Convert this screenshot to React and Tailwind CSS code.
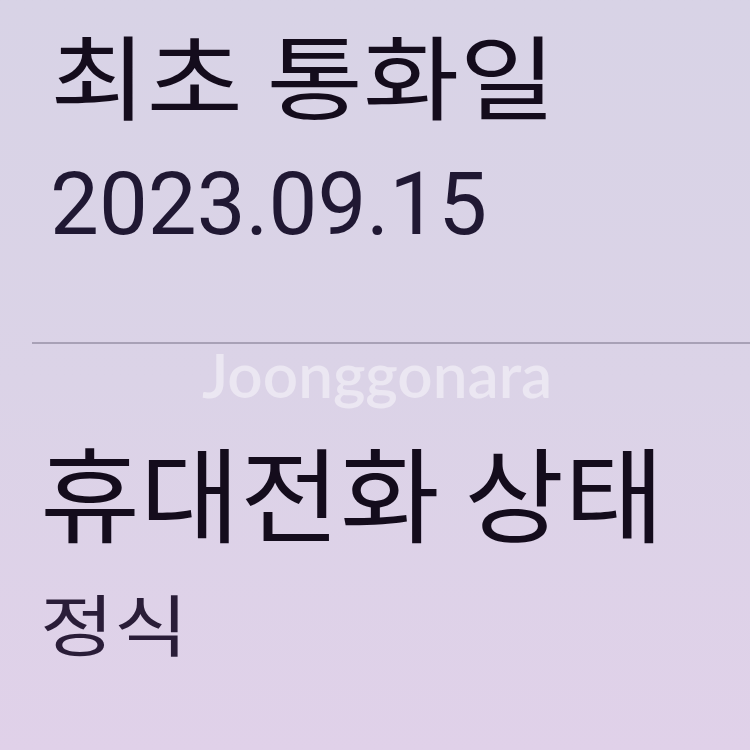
import React from 'react';

const KR = { fontFamily: '"Noto Sans CJK KR", "Noto Sans", sans-serif' };

export default function App() {
  return (
    <div className="relative w-[750px] h-[750px] overflow-hidden bg-gradient-to-b from-[#d8d3e6] via-[#dbd3e7] to-[#e0d1e9] text-[#140c1c]">
      <div className="pl-[50px] pt-[27px]">
        <div className="origin-left scale-x-[1.14] text-[92px] leading-none font-normal" style={KR}>최초 통화일</div>
        <div className="mt-[42px] text-[87px] leading-none font-['Roboto',sans-serif] text-[#201833]">2023.09.15</div>
      </div>

      <div className="mt-[94px] ml-[32px] h-[2px] bg-[#a8a1b6]" />

      <div className="pl-[40px] pt-[95px]">
        <div className="origin-left scale-x-[1.055] text-[103px] leading-none font-normal" style={KR}>휴대전화 상태</div>
        <div className="mt-[46px] origin-left scale-x-[1.2] text-[67px] leading-none text-[#2a1d38]" style={KR}>정식</div>
      </div>

      {/* watermark */}
      <div className="absolute left-[202px] top-[328px] text-[62px] font-semibold text-white/45 font-['Lato',sans-serif] select-none">
        Joonggonara
      </div>
    </div>
  );
}
